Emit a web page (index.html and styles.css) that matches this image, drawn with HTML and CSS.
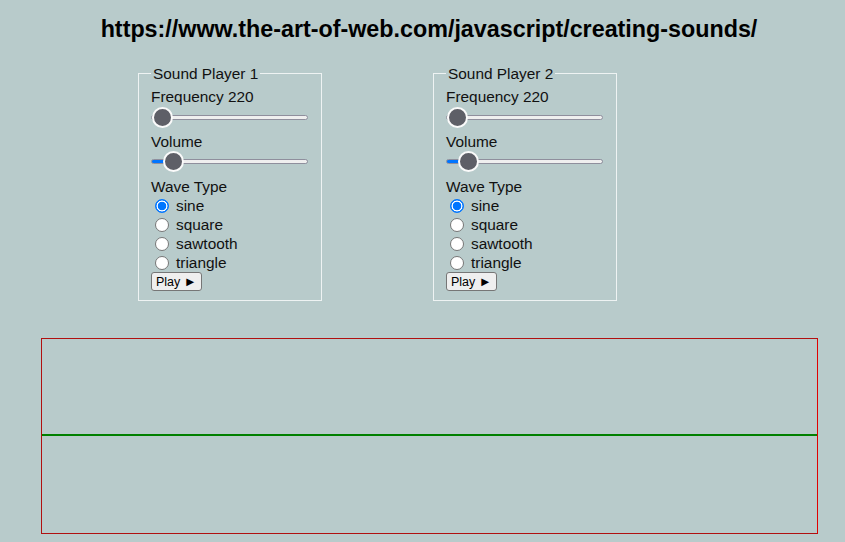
FILE: index.html
```html
<!DOCTYPE html>
<html>
<head>
<meta charset="utf-8">
<link rel="stylesheet" href="styles.css">
</head>
<body>
<h1 class="title">https://www.the-art-of-web.com/javascript/creating-sounds/</h1>
<div class="players">
  <fieldset class="player">
    <legend class="legend">Sound Player 1</legend>
    <div class="label">Frequency 220</div>
    <input class="slider" type="range" min="0" max="100" value="0">
    <div class="label label-gap">Volume</div>
    <input class="slider vol" type="range" min="0" max="100" value="8">
    <div class="label label-gap2">Wave Type</div>
    <div class="radios">
      <label class="radio-row"><input class="radio" type="radio" name="w1" checked><span>sine</span></label>
      <label class="radio-row"><input class="radio" type="radio" name="w1"><span>square</span></label>
      <label class="radio-row"><input class="radio" type="radio" name="w1"><span>sawtooth</span></label>
      <label class="radio-row"><input class="radio" type="radio" name="w1"><span>triangle</span></label>
    </div>
    <button class="play">Play <span class="tri">►</span></button>
  </fieldset>
  <fieldset class="player">
    <legend class="legend">Sound Player 2</legend>
    <div class="label">Frequency 220</div>
    <input class="slider" type="range" min="0" max="100" value="0">
    <div class="label label-gap">Volume</div>
    <input class="slider vol" type="range" min="0" max="100" value="8">
    <div class="label label-gap2">Wave Type</div>
    <div class="radios">
      <label class="radio-row"><input class="radio" type="radio" name="w2" checked><span>sine</span></label>
      <label class="radio-row"><input class="radio" type="radio" name="w2"><span>square</span></label>
      <label class="radio-row"><input class="radio" type="radio" name="w2"><span>sawtooth</span></label>
      <label class="radio-row"><input class="radio" type="radio" name="w2"><span>triangle</span></label>
    </div>
    <button class="play">Play <span class="tri">►</span></button>
  </fieldset>
</div>
<div class="scope">
  <svg class="scope-svg" width="775" height="194" viewBox="0 0 775 194">
    <line x1="0" y1="96" x2="775" y2="96" stroke="#008000" stroke-width="2"/>
  </svg>
</div>
</body>
</html>
```
FILE: styles.css
```css
html, body {
  margin: 0;
  padding: 0;
  background: #b8cbcb;
  font-family: Arial, "Liberation Sans", sans-serif;
  color: #000;
  overflow: hidden;
}

.title {
  margin: 0;
  padding: 16px 0 0 13px;
  font-size: 23.3px;
  line-height: 26px;
  font-weight: bold;
  text-align: center;
  color: #000;
}

.players {
  display: flex;
  gap: 111px;
  padding-left: 138px;
  margin-top: 23px;
}

.player {
  margin: 0;
  width: 184px;
  box-sizing: border-box;
  border: 1px solid #eef3f3;
  padding: 0 12px 9px 12px;
  display: flex;
  flex-direction: column;
  align-items: flex-start;
}

.legend {
  font-size: 15.4px;
  line-height: 17px;
  padding: 0 2px;
  margin-left: 0;
  color: #111;
}

.label {
  font-size: 15.4px;
  line-height: 18px;
  margin-top: 6px;
  color: #111;
}

.label-gap { margin-top: 6px; }
.label-gap2 { margin-top: 7px; }

.slider {
  -webkit-appearance: none;
  appearance: none;
  width: 157px;
  height: 20px;
  margin: 1px 0 0 0;
  padding: 0;
  background: transparent;
}

.slider::-webkit-slider-runnable-track {
  height: 5px;
  background: #efefef;
  border: 1px solid #8f8f9d;
  border-radius: 3px;
  box-sizing: border-box;
}

.slider.vol::-webkit-slider-runnable-track {
  background: linear-gradient(to right, #0075ff 0, #0075ff 14px, #efefef 14px);
  border-color: #8f8f9d;
}

.slider::-webkit-slider-thumb {
  -webkit-appearance: none;
  appearance: none;
  width: 21px;
  height: 21px;
  margin-top: -9px;
  border-radius: 50%;
  background: #5e5f67;
  border: 2px solid #fafafa;
  box-sizing: border-box;
}

.slider.vol {
  margin-top: 0;
}

.radios {
  display: flex;
  flex-direction: column;
}

.radio-row {
  display: flex;
  align-items: center;
  height: 19px;
  font-size: 15.4px;
  color: #111;
}

.radio {
  -webkit-appearance: none;
  appearance: none;
  width: 14px;
  height: 14px;
  margin: 0 7px 0 4px;
  border: 1px solid #767676;
  border-radius: 50%;
  background: #fff;
  box-sizing: border-box;
}

.radio:checked {
  border: 1px solid #0075ff;
  background: radial-gradient(circle, #0075ff 0, #0075ff 4px, #fff 4.6px, #fff 5.2px, #0075ff 5.8px);
}

.play {
  margin-top: 0;
  font-family: Arial, "Liberation Sans", sans-serif;
  font-size: 12.5px;
  line-height: 15px;
  padding: 1px 4px 1px 4px;
  height: 19px;
  border: 1px solid #767676;
  border-radius: 3px;
  background: #efefef;
  color: #000;
}

.tri {
  font-size: 13px;
}

.scope {
  margin: 37px 0 0 41px;
  width: 777px;
  height: 196px;
  box-sizing: border-box;
  border: 1px solid #b01010;
  border-right-color: #e00000;
}

.scope-svg {
  display: block;
}
```
